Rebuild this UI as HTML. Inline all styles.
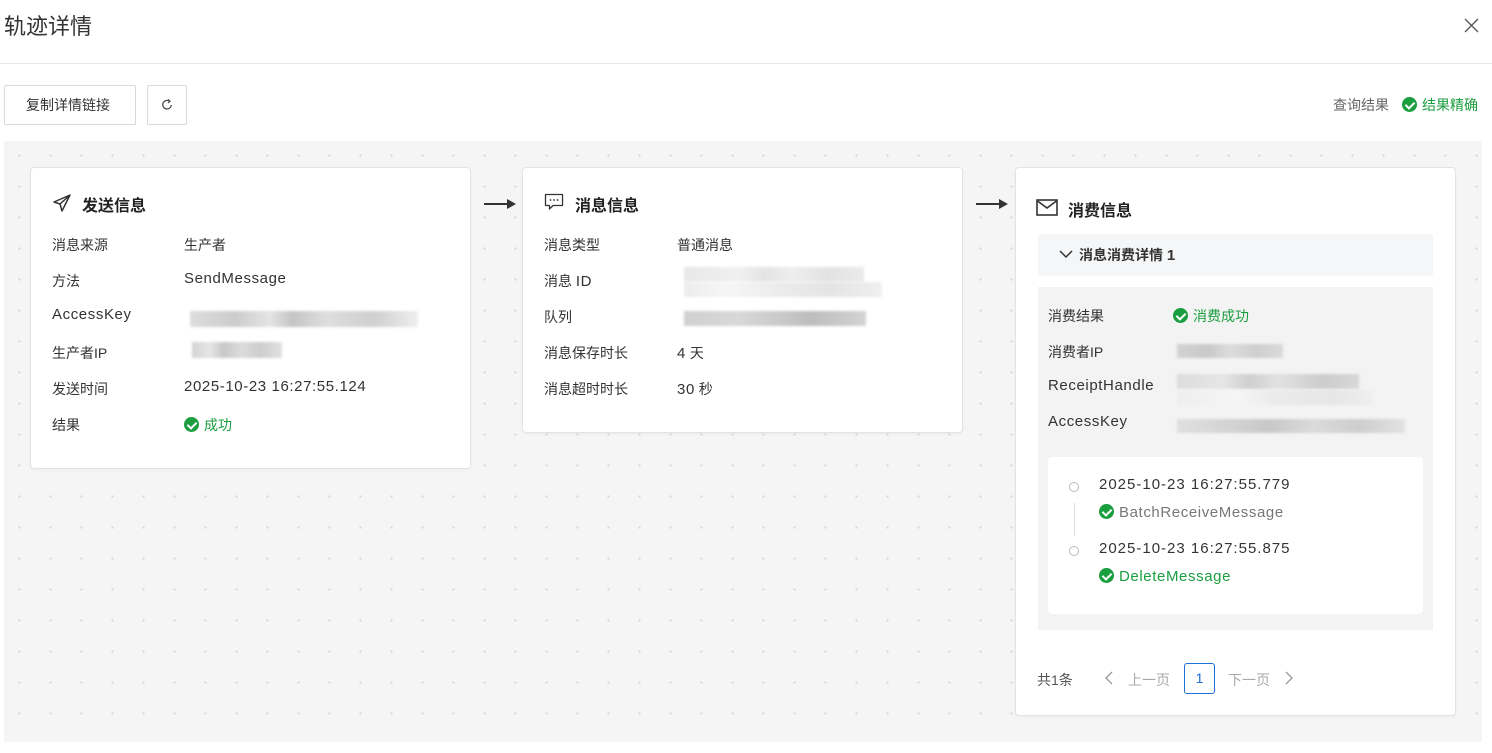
<!DOCTYPE html>
<html><head><meta charset="utf-8"><style>
*{margin:0;padding:0;box-sizing:border-box}
body{width:1492px;height:753px;background:#fff;position:relative;overflow:hidden;font-family:"Liberation Sans","Noto Sans CJK SC",sans-serif;color:#333;font-size:14px}
.a{position:absolute;white-space:nowrap}
.lt{font-size:15px;letter-spacing:.6px}
.canvas{position:absolute;left:4px;top:141px;width:1478px;height:601px;background-color:#f5f5f5;background-image:radial-gradient(circle,#d6d6d6 1px,transparent 1.3px);background-size:31px 31px;background-position:0px -1px}
.card{position:absolute;background:#fff;border:1px solid #e3e3e3;border-radius:4px;box-shadow:0 1px 2px rgba(0,0,0,.04)}
.h{font-size:16px;font-weight:bold;color:#222}
.g{color:#1a9e3f}
.ck{display:inline-block;width:15px;height:15px;border-radius:50%;background:#1a9e3f;vertical-align:-2px;margin-right:5px;position:relative}
.ck:after{content:"";position:absolute;left:4.5px;top:3px;width:4px;height:7px;border:solid #fff;border-width:0 2px 2px 0;transform:rotate(45deg)}
.blur{position:absolute;filter:blur(1.2px)}
.btn{position:absolute;border:1px solid #d9d9d9;border-radius:2px;background:#fff}
</style></head><body>
<div class="a" style="left:4px;top:9px;font-size:22px;color:#333">轨迹详情</div>
<svg class="a" style="left:1464px;top:18px" width="15" height="15" viewBox="0 0 15 15"><path d="M1 1L14 14M14 1L1 14" stroke="#555" stroke-width="1.3"/></svg>
<div class="a" style="left:0;top:63px;width:1492px;height:1px;background:#e8e8e8"></div>

<div class="btn" style="left:4px;top:85px;width:132px;height:40px"></div>
<div class="a" style="left:26px;top:95px;font-size:14px;color:#333">复制详情链接</div>
<div class="btn" style="left:147px;top:85px;width:40px;height:40px"></div>
<svg class="a" style="left:160px;top:98px" width="14" height="14" viewBox="0 0 14 14"><path d="M9.5 3.2A4.3 4.3 0 1 0 11.3 7" fill="none" stroke="#444" stroke-width="1.2"/><path d="M8 1.5L10 3.3 8.2 5" fill="none" stroke="#444" stroke-width="1.2"/></svg>
<div class="a" style="left:1333px;top:95px;color:#666">查询结果</div>
<div class="a g" style="left:1402px;top:95px"><span class="ck"></span>结果精确</div>

<div class="canvas"></div>

<!-- card 1 -->
<div class="card" style="left:30px;top:167px;width:441px;height:302px"></div>
<svg class="a" style="left:52px;top:193px" width="20" height="20" viewBox="0 0 20 20"><path d="M18 2L2 9l6 2 2 7z M8 11L18 2" fill="none" stroke="#333" stroke-width="1.5" stroke-linejoin="round"/></svg>
<div class="a h" style="left:82px;top:192px">发送信息</div>
<div class="a" style="left:52px;top:235px">消息来源</div><div class="a" style="left:184px;top:235px">生产者</div>
<div class="a" style="left:52px;top:271px">方法</div><div class="a lt" style="left:184px;top:270px">SendMessage</div>
<div class="a lt" style="left:52px;top:306px">AccessKey</div>
<div class="blur" style="left:190px;top:311px;width:228px;height:16px;background:linear-gradient(90deg,#ddd,#ccc 20%,#e4e4e4 35%,#c4c4c4 45%,#dedede 60%,#cfcfcf 80%,#eee)"></div>
<div class="a" style="left:52px;top:343px">生产者IP</div>
<div class="blur" style="left:192px;top:342px;width:90px;height:16px;background:linear-gradient(90deg,#d4d4d4,#e6e6e6 20%,#c8c8c8 35%,#dcdcdc 55%,#cdcdcd 75%,#e0e0e0)"></div>
<div class="a" style="left:52px;top:379px">发送时间</div><div class="a lt" style="left:184px;top:378px">2025-10-23 16:27:55.124</div>
<div class="a" style="left:52px;top:415px">结果</div><div class="a g" style="left:184px;top:415px"><span class="ck"></span>成功</div>

<svg class="a" style="left:484px;top:198px" width="32" height="12" viewBox="0 0 32 12"><path d="M0 6H24" stroke="#333" stroke-width="2"/><path d="M23 1L32 6 23 11z" fill="#333"/></svg>
<svg class="a" style="left:976px;top:198px" width="32" height="12" viewBox="0 0 32 12"><path d="M0 6H24" stroke="#333" stroke-width="2"/><path d="M23 1L32 6 23 11z" fill="#333"/></svg>

<!-- card 2 -->
<div class="card" style="left:522px;top:167px;width:441px;height:266px"></div>
<svg class="a" style="left:544px;top:193px" width="20" height="18" viewBox="0 0 20 18"><path d="M1.5 1.5h17v11H9l-3.5 3.5v-3.5h-4z" fill="none" stroke="#333" stroke-width="1.3" stroke-linejoin="round"/><circle cx="6.5" cy="7" r=".9" fill="#333"/><circle cx="10" cy="7" r=".9" fill="#333"/><circle cx="13.5" cy="7" r=".9" fill="#333"/></svg>
<div class="a h" style="left:575px;top:192px">消息信息</div>
<div class="a" style="left:544px;top:235px">消息类型</div><div class="a" style="left:677px;top:235px">普通消息</div>
<div class="a" style="left:544px;top:271px">消息 <span class="lt">ID</span></div>
<div class="blur" style="left:684px;top:267px;width:180px;height:15px;background:linear-gradient(90deg,#e8e8e8,#f0f0f0 30%,#e4e4e4 45%,#eee 60%,#e2e2e2 80%,#ebebeb)"></div>
<div class="blur" style="left:684px;top:282px;width:198px;height:15px;background:linear-gradient(90deg,#ececec,#f6f6f6 20%,#ebebeb 50%,#e4e4e4 75%,#f0f0f0)"></div>
<div class="a" style="left:544px;top:307px">队列</div>
<div class="blur" style="left:684px;top:311px;width:182px;height:15px;background:linear-gradient(90deg,#d0d0d0,#d8d8d8 30%,#c8c8c8 55%,#bdbdbd 70%,#ccc 90%,#d4d4d4)"></div>
<div class="a" style="left:544px;top:343px">消息保存时长</div><div class="a" style="left:677px;top:343px"><span class="lt">4</span> 天</div>
<div class="a" style="left:544px;top:379px">消息超时时长</div><div class="a" style="left:677px;top:379px"><span class="lt">30</span> 秒</div>

<!-- card 3 -->
<div class="card" style="left:1015px;top:167px;width:441px;height:549px"></div>
<svg class="a" style="left:1036px;top:199px" width="22" height="17" viewBox="0 0 22 17"><rect x="1" y="1" width="20" height="15" fill="none" stroke="#333" stroke-width="1.6"/><path d="M1.5 2L11 9l9.5-7" fill="none" stroke="#333" stroke-width="1.6"/></svg>
<div class="a h" style="left:1068px;top:197px">消费信息</div>
<div class="a" style="left:1038px;top:234px;width:395px;height:42px;background:#f5f6f7;border-radius:3px"></div>
<svg class="a" style="left:1059px;top:250px" width="14" height="9" viewBox="0 0 14 9"><path d="M1 1l6 6 6-6" fill="none" stroke="#333" stroke-width="1.5"/></svg>
<div class="a" style="left:1079px;top:245px;font-weight:bold;color:#333">消息消费详情 <span style="font-size:15px">1</span></div>
<div class="a" style="left:1038px;top:287px;width:395px;height:343px;background:#f3f3f3"></div>
<div class="a" style="left:1048px;top:306px">消费结果</div><div class="a g" style="left:1173px;top:306px"><span class="ck"></span>消费成功</div>
<div class="a" style="left:1048px;top:342px">消费者IP</div>
<div class="blur" style="left:1177px;top:344px;width:106px;height:14px;background:linear-gradient(90deg,#d2d2d2,#c9c9c9 30%,#dcdcdc 50%,#cfcfcf 75%,#dadada)"></div>
<div class="a lt" style="left:1048px;top:377px">ReceiptHandle</div>
<div class="blur" style="left:1177px;top:374px;width:182px;height:15px;background:linear-gradient(90deg,#dcdcdc,#e6e6e6 25%,#cfcfcf 40%,#e2e2e2 55%,#ccc 80%,#d8d8d8)"></div>
<div class="blur" style="left:1177px;top:390px;width:196px;height:15px;background:linear-gradient(90deg,#eee,#f5f5f5 30%,#ebebeb 50%,#e6e6e6 80%,#efefef)"></div>
<div class="a lt" style="left:1048px;top:413px">AccessKey</div>
<div class="blur" style="left:1177px;top:419px;width:228px;height:14px;background:linear-gradient(90deg,#e0e0e0,#d2d2d2 25%,#c8c8c8 40%,#dadada 60%,#cecece 80%,#e2e2e2)"></div>
<div class="a" style="left:1048px;top:457px;width:375px;height:157px;background:#fff;border-radius:4px"></div>
<div class="a" style="left:1069px;top:482px;width:10px;height:10px;border:1px solid #bbb;border-radius:50%"></div>
<div class="a" style="left:1074px;top:503px;width:1px;height:33px;background:#ddd"></div>
<div class="a" style="left:1069px;top:546px;width:10px;height:10px;border:1px solid #bbb;border-radius:50%"></div>
<div class="a" style="left:1099px;top:476px;font-size:15px;letter-spacing:1px;color:#333">2025-10-23 16:27:55.779</div>
<div class="a" style="left:1099px;top:504px;color:#777"><span class="ck"></span><span class="lt">BatchReceiveMessage</span></div>
<div class="a" style="left:1099px;top:540px;font-size:15px;letter-spacing:1px;color:#333">2025-10-23 16:27:55.875</div>
<div class="a g" style="left:1099px;top:568px"><span class="ck"></span><span class="lt">DeleteMessage</span></div>
<div class="a" style="left:1037px;top:670px;color:#555">共1条</div>
<svg class="a" style="left:1104px;top:671px" width="9" height="14" viewBox="0 0 9 14"><path d="M8 1L2 7l6 6" fill="none" stroke="#999" stroke-width="1.3"/></svg>
<div class="a" style="left:1128px;top:670px;color:#aaa">上一页</div>
<div class="a" style="left:1184px;top:663px;width:31px;height:31px;border:1.5px solid #1f6fd9;border-radius:3px;color:#1f6fd9;text-align:center;line-height:28px">1</div>
<div class="a" style="left:1228px;top:670px;color:#aaa">下一页</div>
<svg class="a" style="left:1285px;top:671px" width="9" height="14" viewBox="0 0 9 14"><path d="M1 1l6 6-6 6" fill="none" stroke="#999" stroke-width="1.3"/></svg>
</body></html>
